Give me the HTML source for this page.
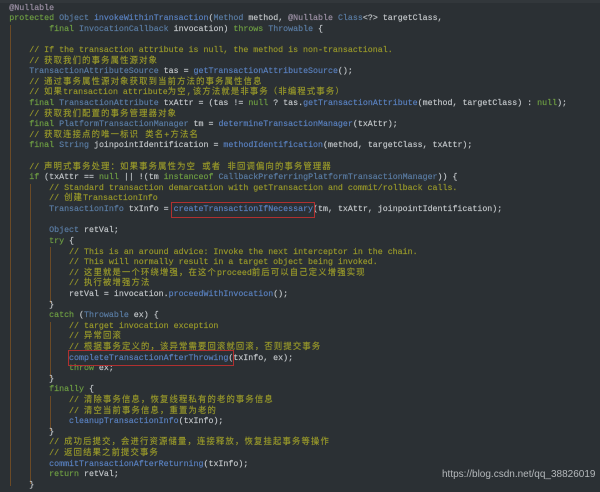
<!DOCTYPE html>
<html><head><meta charset="utf-8"><style>
html,body{margin:0;padding:0;}
body{width:600px;height:486px;background:#2b3034;overflow:hidden;position:relative;}
.top{position:absolute;left:0;top:0;width:600px;height:3px;background:#32373b;}
pre{position:absolute;left:9.3px;top:3.5px;margin:0;font-family:"Liberation Mono","Noto Sans CJK SC",monospace;font-size:8.3px;line-height:10.61px;color:#c4c8cb;-webkit-text-stroke:0.15px;}
.k{color:#6fa043}.t{color:#5b7ea6}.c{color:#9a9a2a}.m{color:#5a82c2}.a{color:#9f93a8}
b{font-weight:normal;letter-spacing:1.2px;}
.g{position:absolute;width:1px;background:#6b4a26;}
.box{position:absolute;border:1px solid #b03030;}
.wm{position:absolute;left:442px;top:469px;font-family:"Liberation Sans",sans-serif;font-size:10px;color:#b4b8bb;}
</style></head><body>
<div class="top"></div>
<div class="g" style="left:10px;top:25px;height:461px"></div>
<div class="g" style="left:30px;top:184px;height:300px"></div>
<div class="g" style="left:50px;top:247px;height:56px"></div>
<div class="g" style="left:50px;top:322px;height:56px"></div>
<div class="g" style="left:50px;top:396px;height:35px"></div>
<pre><span class="a">@Nullable</span>
<span class="k">protected</span> <span class="t">Object</span> <span class="m">invokeWithinTransaction</span>(<span class="t">Method</span> method, <span class="a">@Nullable</span> <span class="t">Class</span>&lt;?&gt; targetClass,
        <span class="k">final</span> <span class="t">InvocationCallback</span> invocation) <span class="k">throws</span> <span class="t">Throwable</span> {

    <span class="c">// If the transaction attribute is null, the method is non-transactional.</span>
    <span class="c">// <b>获取我们的事务属性源对象</b></span>
    <span class="t">TransactionAttributeSource</span> tas = <span class="m">getTransactionAttributeSource</span>();
    <span class="c">// <b>通过事务属性源对象获取到当前方法的事务属性信息</b></span>
    <span class="c">// <b>如果</b>transaction attribute<b>为空,该方法就是非事务（非编程式事务）</b></span>
    <span class="k">final</span> <span class="t">TransactionAttribute</span> txAttr = (tas != <span class="k">null</span> ? tas.<span class="m">getTransactionAttribute</span>(method, targetClass) : <span class="k">null</span>);
    <span class="c">// <b>获取我们配置的事务管理器对象</b></span>
    <span class="k">final</span> <span class="t">PlatformTransactionManager</span> tm = <span class="m">determineTransactionManager</span>(txAttr);
    <span class="c">// <b>获取连接点的唯一标识 类名+方法名</b></span>
    <span class="k">final</span> <span class="t">String</span> joinpointIdentification = <span class="m">methodIdentification</span>(method, targetClass, txAttr);

    <span class="c">// <b>声明式事务处理：如果事务属性为空 或者 非回调偏向的事务管理器</b></span>
    <span class="k">if</span> (txAttr == <span class="k">null</span> || !(tm <span class="k">instanceof</span> <span class="t">CallbackPreferringPlatformTransactionManager</span>)) {
        <span class="c">// Standard transaction demarcation with getTransaction and commit/rollback calls.</span>
        <span class="c">// <b>创建</b>TransactionInfo</span>
        <span class="t">TransactionInfo</span> txInfo = <span class="m">createTransactionIfNecessary</span>(tm, txAttr, joinpointIdentification);

        <span class="t">Object</span> retVal;
        <span class="k">try</span> {
            <span class="c">// This is an around advice: Invoke the next interceptor in the chain.</span>
            <span class="c">// This will normally result in a target object being invoked.</span>
            <span class="c">// <b>这里就是一个环绕增强，在这个</b>proceed<b>前后可以自己定义增强实现</b></span>
            <span class="c">// <b>执行被增强方法</b></span>
            retVal = invocation.<span class="m">proceedWithInvocation</span>();
        }
        <span class="k">catch</span> (<span class="t">Throwable</span> ex) {
            <span class="c">// target invocation exception</span>
            <span class="c">// <b>异常回滚</b></span>
            <span class="c">// <b>根据事务定义的，该异常需要回滚就回滚，否则提交事务</b></span>
            <span class="m">completeTransactionAfterThrowing</span>(txInfo, ex);
            <span class="k">throw</span> ex;
        }
        <span class="k">finally</span> {
            <span class="c">// <b>清除事务信息，恢复线程私有的老的事务信息</b></span>
            <span class="c">// <b>清空当前事务信息，重置为老的</b></span>
            <span class="m">cleanupTransactionInfo</span>(txInfo);
        }
        <span class="c">// <b>成功后提交，会进行资源储量，连接释放，恢复挂起事务等操作</b></span>
        <span class="c">// <b>返回结果之前提交事务</b></span>
        <span class="m">commitTransactionAfterReturning</span>(txInfo);
        <span class="k">return</span> retVal;
    }</pre>
<div class="box" style="left:171px;top:202px;width:142px;height:14px"></div>
<div class="box" style="left:68px;top:350px;width:164px;height:14px"></div>
<div class="wm">https://blog.csdn.net/qq_38826019</div>
</body></html>
